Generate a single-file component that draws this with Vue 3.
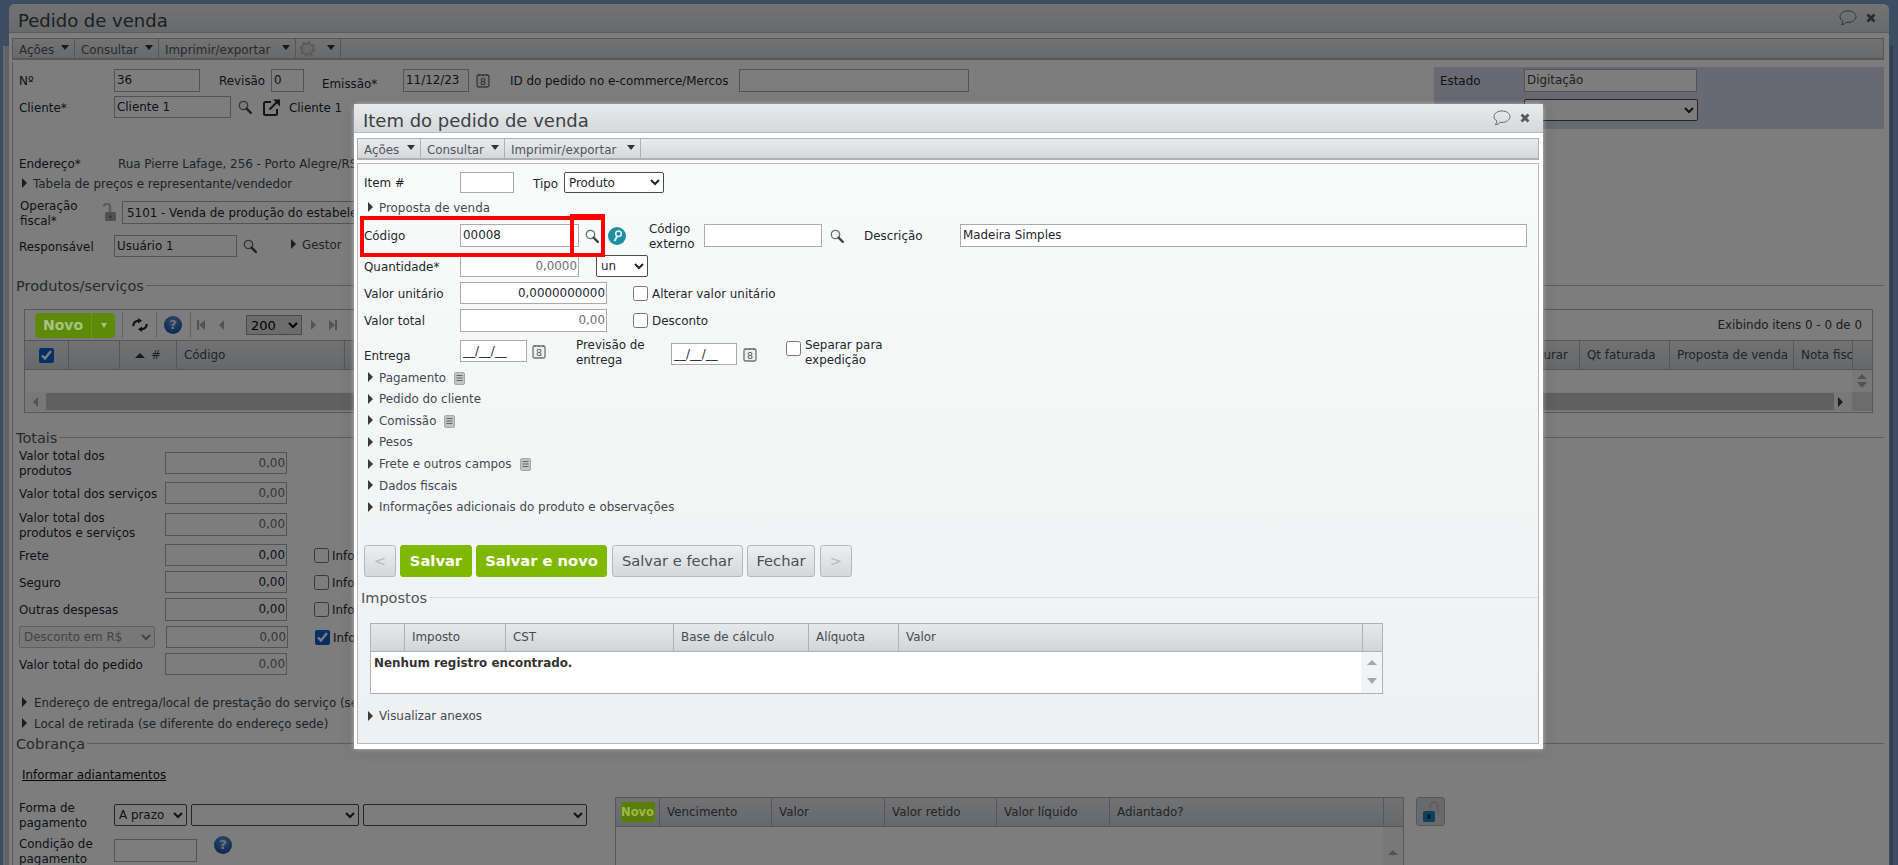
<script setup>
const mainMenu = [
  { label: 'Ações', cls: 'w62' },
  { label: 'Consultar', cls: 'w84' },
  { label: 'Imprimir/exportar', cls: 'w137' },
]
const itemMenu = [
  { label: 'Ações', cls: 'w63' },
  { label: 'Consultar', cls: 'w84' },
  { label: 'Imprimir/exportar', cls: 'w136' },
]
const accordion = [
  { label: 'Pagamento', note: true },
  { label: 'Pedido do cliente' },
  { label: 'Comissão', note: true },
  { label: 'Pesos' },
  { label: 'Frete e outros campos', note: true },
  { label: 'Dados fiscais' },
  { label: 'Informações adicionais do produto e observações' },
]
const taxCols = [
  { label: '', cls: 'w34' },
  { label: 'Imposto', cls: 'w101' },
  { label: 'CST', cls: 'w168' },
  { label: 'Base de cálculo', cls: 'w135' },
  { label: 'Alíquota', cls: 'w90' },
  { label: 'Valor', cls: 'w464' },
]
const billCols = [
  { label: 'Vencimento', cls: 'w112' },
  { label: 'Valor', cls: 'w113' },
  { label: 'Valor retido', cls: 'w112' },
  { label: 'Valor líquido', cls: 'w113' },
  { label: 'Adiantado?', cls: 'w274' },
]
</script>

<template>
  <div class="desk">
    <svg class="sprite" aria-hidden="true">
      <symbol id="i-search" viewBox="0 0 14 14">
        <circle cx="5.5" cy="5.5" r="4.2" fill="#f4f8fb" stroke="#6a6f73" stroke-width="1.3" />
        <path d="M8.6 8.6l4.2 4.2" stroke="#45484b" stroke-width="2.4" stroke-linecap="round" />
      </symbol>
      <symbol id="i-ext" viewBox="0 0 19 19">
        <path d="M9 4H3.5A1.5 1.5 0 0 0 2 5.5v10A1.5 1.5 0 0 0 3.5 17h10a1.5 1.5 0 0 0 1.500-1.500V11" fill="none" stroke="#2b2b2b" stroke-width="2" />
        <path d="M7.500 11.500L15 4" fill="none" stroke="#2b2b2b" stroke-width="2" />
        <path d="M11 1.500h7v7z" fill="#2b2b2b" />
      </symbol>
      <symbol id="i-cal" viewBox="0 0 14 15">
        <rect x="1" y="2" width="12" height="12" rx="1.500" fill="#eef0f1" stroke="#6f7376" stroke-width="1.300" />
        <path d="M3 1v2M7 1v2M11 1v2" stroke="#6f7376" stroke-width="1.300" />
        <text x="7" y="12.200" text-anchor="middle" font-size="9.500" font-family="DejaVu Sans" fill="#55595c">8</text>
      </symbol>
      <symbol id="i-note" viewBox="0 0 11 13">
        <rect x=".5" y=".5" width="10" height="12" rx="1.500" fill="#c2c4c6" stroke="#a6a8aa" />
        <path d="M2.500 3.500h6M2.500 6h6M2.500 8.500h6" stroke="#63666a" stroke-width="1" />
      </symbol>
      <symbol id="i-talk" viewBox="0 0 19 17">
        <path d="M9.500 1C5 1 1 3.500 1 7c0 2 1.200 3.600 3 4.600 0 1.300-.5 2.700-1.500 4 2 0 3.800-1 4.800-2.500.8.100 1.400.100 2.200.100 4.500 0 8.500-2.700 8.500-6.200S14 1 9.500 1z" fill="none" stroke="#5d6265" stroke-width="1" />
      </symbol>
      <symbol id="i-x" viewBox="0 0 10 10">
        <path d="M1.500 1.500l7 7M8.500 1.500l-7 7" stroke="#55595c" stroke-width="2.800" />
      </symbol>
      <symbol id="i-gear" viewBox="0 0 17 18">
        <circle cx="8.500" cy="9" r="5.500" fill="none" stroke="#b9b9b9" stroke-width="2" />
        <circle cx="8.500" cy="9" r="7" fill="none" stroke="#b9b9b9" stroke-width="2.200" stroke-dasharray="2.500 3" />
        <circle cx="8.500" cy="9" r="2.500" fill="none" stroke="#c8c8c8" />
      </symbol>
      <symbol id="i-lock" viewBox="0 0 18 19">
        <path d="M5 3.500A3 3 0 0 1 11 3.500V9" fill="none" stroke="#bbb" stroke-width="2.500" transform="translate(1 0)" />
        <rect x="7" y="9" width="11" height="9" rx="1.500" fill="#a6a6a6" />
        <rect x="11.500" y="12.500" width="2" height="2.500" fill="#666" />
      </symbol>
      <symbol id="i-lockblue" viewBox="0 0 18 22">
        <path d="M8 10V5a4 4 0 0 1 8 0v8" fill="none" stroke="#c4c4c4" stroke-width="2" />
        <rect x="1" y="10" width="12" height="11" rx="1.500" fill="#1e86c2" />
        <rect x="5.500" y="13.500" width="3" height="4.500" fill="#0a2a3f" />
      </symbol>
      <symbol id="i-key" viewBox="0 0 18 18">
        <circle cx="9" cy="9" r="9" fill="#1f8fa3" />
        <circle cx="10.500" cy="6.800" r="2.800" fill="none" stroke="#e8f6f8" stroke-width="1.500" />
        <path d="M9 9.500L6.500 14" stroke="#e8f6f8" stroke-width="1.800" />
      </symbol>
      <symbol id="i-refresh" viewBox="0 0 16 14">
        <path d="M1.500 8c-.5-3 2-5.500 5.500-5" fill="none" stroke="#1f1f1f" stroke-width="2.200" />
        <path d="M6 0l4 2.800L6 5.500z" fill="#1f1f1f" />
        <path d="M14.500 6c.5 3-2 5.500-5.500 5" fill="none" stroke="#1f1f1f" stroke-width="2.200" />
        <path d="M10 14l-4-2.800L10 8.500z" fill="#1f1f1f" />
      </symbol>
    </svg>

    <div class="side-l"></div>

    <main class="win">
      <header class="titlebar">
        <h1 class="title">Pedido de venda</h1>
        <svg class="ic-talk"><use href="#i-talk" /></svg>
        <svg class="ic-x"><use href="#i-x" /></svg>
      </header>

      <nav class="menu">
        <div v-for="m in mainMenu" :key="m.label" class="menu-item" :class="m.cls">
          <span>{{ m.label }}</span><i class="tri-d"></i>
        </div>
        <div class="menu-item menu-gear">
          <svg class="ic-gear"><use href="#i-gear" /></svg><i class="tri-d"></i>
        </div>
      </nav>

      <div class="panel">
        <section class="top">
          <div class="top-left">
            <div class="f h23 mt7">
              <span class="lab w95">Nº</span>
              <input class="inp w86" readonly value="36" />
              <span class="lab ml19 w52">Revisão</span>
              <input class="inp w33" readonly value="0" />
              <span class="lab ml18 w81 dn2">Emissão*</span>
              <input class="inp w66" readonly value="11/12/23" />
              <svg class="ic-cal ml7"><use href="#i-cal" /></svg>
              <span class="lab ml20 w229">ID do pedido no e-commerce/Mercos</span>
              <input class="inp w230" readonly />
            </div>
            <div class="f h22 mt4">
              <span class="lab w95">Cliente*</span>
              <input class="inp w117" readonly value="Cliente 1" />
              <svg class="ic-search ml7"><use href="#i-search" /></svg>
              <svg class="ic-ext ml10"><use href="#i-ext" /></svg>
              <span class="lab ml8">Cliente 1</span>
            </div>
            <div class="f h16 mt37">
              <span class="lab w99">Endereço*</span>
              <span class="lab soft">Rua Pierre Lafage, 256 - Porto Alegre/RS</span>
            </div>
            <div class="f h16 mt4 ml3 acc-row">
              <i class="tri-r"></i><span class="lab soft">Tabela de preços e representante/vendedor</span>
            </div>
            <div class="f h23 mt10">
              <span class="lab two w78 ml1">Operação fiscal*</span>
              <svg class="ic-lock"><use href="#i-lock" /></svg>
              <select class="sel-flat ml6 w480"><option>5101 - Venda de produção do estabelecimento</option></select>
            </div>
            <div class="f h22 mt11">
              <span class="lab w95">Responsável</span>
              <input class="inp w123" readonly value="Usuário 1" />
              <svg class="ic-search ml6"><use href="#i-search" /></svg>
              <span class="f ml34 up2 acc-row"><i class="tri-r"></i><span class="lab soft">Gestor</span></span>
            </div>
          </div>
          <aside class="state">
            <div class="f h23">
              <span class="lab w84">Estado</span>
              <input class="inp inp-soft w173" readonly value="Digitação" />
            </div>
            <div class="f h22 mt7">
              <span class="lab w84 soft">Estado</span>
              <select class="sel w174"><option></option></select>
            </div>
          </aside>
        </section>

        <div class="legend"><span class="legend-t">Produtos/serviços</span><i class="legend-l"></i></div>

        <section class="grid-a">
          <div class="grid-tools">
            <div class="novo"><span class="novo-t">Novo</span><span class="novo-c"><i class="tri-d tri-pale"></i></span></div>
            <i class="vsep ml7"></i>
            <svg class="ic-refresh ml9"><use href="#i-refresh" /></svg>
            <i class="vsep ml8"></i>
            <span class="help ml7">?</span>
            <i class="vsep ml8"></i>
            <i class="nav-first ml6"></i>
            <i class="tri-l ml14"></i>
            <select class="sel-page ml22"><option>200</option></select>
            <i class="tri-r tri-grey ml9"></i>
            <i class="nav-last ml13"></i>
            <span class="count">Exibindo itens 0 - 0 de 0</span>
          </div>
          <div class="ghead">
            <div class="gc w44 center"><input type="checkbox" class="chk" checked /></div>
            <div class="gc w51"></div>
            <div class="gc w57 center"><i class="tri-u"></i><span class="ml6">#</span></div>
            <div class="gc w168 pad7">Código</div>
            <div class="gc w1235 ralign">Qt a faturar</div>
            <div class="gc w90 pad7">Qt faturada</div>
            <div class="gc w124 pad7">Proposta de venda</div>
            <div class="gc w59 pad7 clip">Nota fiscal</div>
            <div class="gc-end"></div>
          </div>
          <div class="gbody">
            <div class="gbody-fill"></div>
            <div class="gscroll"><i class="tri-u tri-g"></i><i class="tri-dn tri-g"></i></div>
          </div>
          <div class="hbar">
            <i class="tri-l tri-bar"></i>
            <div class="hthumb"></div>
            <i class="tri-r"></i>
            <div class="hcorner"></div>
          </div>
        </section>

        <div class="legend mt17"><span class="legend-t">Totais</span><i class="legend-l"></i></div>

        <section class="totals">
          <div class="f h22 mt6">
            <span class="lab two w146">Valor total dos<br />produtos</span>
            <input class="inp num dim w122" readonly value="0,00" />
          </div>
          <div class="f h22 mt8">
            <span class="lab w146">Valor total dos serviços</span>
            <input class="inp num dim w122" readonly value="0,00" />
          </div>
          <div class="f h23 mt9">
            <span class="lab two w146">Valor total dos<br />produtos e serviços</span>
            <input class="inp num dim w122" readonly value="0,00" />
          </div>
          <div class="f h22 mt8">
            <span class="lab w146">Frete</span>
            <input class="inp num w122" readonly value="0,00" />
            <input type="checkbox" class="chk ml27" /><span class="lab ml3">Informar</span>
          </div>
          <div class="f h22 mt5">
            <span class="lab w146">Seguro</span>
            <input class="inp num w122" readonly value="0,00" />
            <input type="checkbox" class="chk ml27" /><span class="lab ml3">Informar</span>
          </div>
          <div class="f h23 mt5">
            <span class="lab w146">Outras despesas</span>
            <input class="inp num w122" readonly value="0,00" />
            <input type="checkbox" class="chk ml27" /><span class="lab ml3">Informar</span>
          </div>
          <div class="f h22 mt5">
            <select class="sel sel-off w136" disabled><option>Desconto em R$</option></select>
            <input class="inp num dim ml11 w122" readonly value="0,00" />
            <input type="checkbox" class="chk ml27" checked /><span class="lab ml3">Informar</span>
          </div>
          <div class="f h22 mt5">
            <span class="lab w146">Valor total do pedido</span>
            <input class="inp num dim w122" readonly value="0,00" />
          </div>
          <div class="f h16 mt19 ml3 acc-row">
            <i class="tri-r"></i><span class="lab soft pl6">Endereço de entrega/local de prestação do serviço (se diferente do endereço sede)</span>
          </div>
          <div class="f h16 mt5 ml3 acc-row">
            <i class="tri-r"></i><span class="lab soft pl6">Local de retirada (se diferente do endereço sede)</span>
          </div>
        </section>

        <div class="legend mt5"><span class="legend-t">Cobrança</span><i class="legend-l"></i></div>

        <section class="billing">
          <a class="link">Informar adiantamentos</a>
          <div class="bill-row">
            <div class="bill-left">
              <div class="f h22 mt7">
                <span class="lab two w95">Forma de<br />pagamento</span>
                <select class="sel w73"><option>A prazo</option></select>
                <select class="sel ml4 w168"><option></option></select>
                <select class="sel ml4 w224"><option></option></select>
              </div>
              <div class="f h23 mt13">
                <span class="lab two w95">Condição de<br />pagamento</span>
                <input class="inp w83" readonly />
                <span class="help ml17 up7">?</span>
              </div>
            </div>
            <div class="grid-b">
              <div class="bhead">
                <div class="gc w44 center"><span class="novo-s">Novo</span></div>
                <div v-for="c in billCols" :key="c.label" class="gc pad7" :class="c.cls">{{ c.label }}</div>
                <div class="gc-end"></div>
              </div>
              <div class="gbody tall">
                <div class="gbody-fill"></div>
                <div class="gscroll w20 spaced"><i class="tri-u tri-g"></i><i class="tri-dn tri-g"></i></div>
              </div>
            </div>
            <div class="lockbtn"><svg class="ic-lockb"><use href="#i-lockblue" /></svg></div>
          </div>
        </section>
      </div>
    </main>

    <div class="side-r"></div>

    <div class="overlay"></div>

    <section class="dialog">
      <header class="titlebar">
        <h2 class="title">Item do pedido de venda</h2>
        <svg class="ic-talk"><use href="#i-talk" /></svg>
        <svg class="ic-x"><use href="#i-x" /></svg>
      </header>
      <nav class="menu">
        <div v-for="m in itemMenu" :key="m.label" class="menu-item" :class="m.cls">
          <span>{{ m.label }}</span><i class="tri-d"></i>
        </div>
      </nav>
      <div class="dpanel">
        <div class="dform">
          <div class="f h21 mt8">
            <span class="lab w96">Item #</span>
            <input class="inp w54" />
            <span class="lab ml19 w31 dn-tipo">Tipo</span>
            <select class="sel w100"><option>Produto</option></select>
          </div>
          <div class="f h16 mt6 acc-row dacc">
            <i class="tri-r"></i><span class="lab soft">Proposta de venda</span>
          </div>
          <div class="f h23 mt9">
            <span class="lab w96">Código</span>
            <input class="inp w119" value="00008" />
            <svg class="ic-search ml6"><use href="#i-search" /></svg>
            <svg class="ic-key ml9"><use href="#i-key" /></svg>
            <span class="lab two ml23 w55">Código externo</span>
            <input class="inp w118" />
            <svg class="ic-search ml8"><use href="#i-search" /></svg>
            <span class="lab ml20 w96">Descrição</span>
            <input class="inp w567" value="Madeira Simples" />
          </div>
          <div class="f h22 mt8">
            <span class="lab w96">Quantidade*</span>
            <input class="inp num dim w119" value="0,0000" />
            <select class="sel ml17 w52"><option>un</option></select>
          </div>
          <div class="f h22 mt5">
            <span class="lab w96">Valor unitário</span>
            <input class="inp num w147" value="0,0000000000" />
            <input type="checkbox" class="chk ml26" />
            <span class="lab ml4">Alterar valor unitário</span>
          </div>
          <div class="f h23 mt5">
            <span class="lab w96">Valor total</span>
            <input class="inp num dim w147" value="0,00" />
            <input type="checkbox" class="chk ml26" />
            <span class="lab ml4">Desconto</span>
          </div>
          <div class="f h26 mt8 start">
            <span class="lab w96 dn7">Entrega</span>
            <input class="inp date w67" value="__/__/__" />
            <svg class="ic-cal ml5 dn4"><use href="#i-cal" /></svg>
            <span class="lab two ml30 w95 up4">Previsão de<br />entrega</span>
            <input class="inp date w66 dn3" value="__/__/__" />
            <svg class="ic-cal ml6 dn7"><use href="#i-cal" /></svg>
            <input type="checkbox" class="chk ml29 dn1" />
            <span class="lab two ml4 w90 up4">Separar para<br />expedição</span>
          </div>
          <div class="acc-list">
            <div v-for="a in accordion" :key="a.label" class="f h16 acc-row dacc">
              <i class="tri-r"></i><span class="lab soft">{{ a.label }}</span>
              <svg v-if="a.note" class="ic-note ml2"><use href="#i-note" /></svg>
            </div>
          </div>
          <div class="btns">
            <button class="btn w32 off">&lt;</button>
            <button class="btn go w72 ml4">Salvar</button>
            <button class="btn go w131 ml4">Salvar e novo</button>
            <button class="btn w131 ml5">Salvar e fechar</button>
            <button class="btn w68 ml4">Fechar</button>
            <button class="btn w32 off ml5">&gt;</button>
          </div>
        </div>
        <div class="legend legend-d"><span class="legend-t">Impostos</span><i class="legend-l"></i></div>
        <div class="tax">
          <div class="tax-head">
            <div v-for="c in taxCols" :key="c.cls" class="gc pad7" :class="c.cls">{{ c.label }}</div>
            <div class="gc-end"></div>
          </div>
          <div class="tax-body">
            <div class="tax-empty">Nenhum registro encontrado.</div>
            <div class="gscroll w21 spaced light"><i class="tri-u tri-g"></i><i class="tri-dn tri-g"></i></div>
          </div>
        </div>
        <div class="f h16 mt14 acc-row dacc">
          <i class="tri-r"></i><span class="lab soft">Visualizar anexos</span>
        </div>
      </div>
      <div class="mark mark-a"></div>
      <div class="mark mark-b"></div>
    </section>
  </div>
</template>

<style>
html, body { margin: 0; overflow: hidden; }
</style>

<style scoped>
.desk {
  position: relative; width: 1898px; height: 865px; overflow: hidden;
  display: flex; align-items: stretch;
  background: #7a9fca;
  font-family: "DejaVu Sans", sans-serif; font-size: 11.900px; color: #1d2730;
}
.sprite { position: absolute; width: 0; height: 0; }
.side-l { width: 9px; flex: none; margin-top: 46px; background: linear-gradient(90deg, #7a9fca 0 3px, #d8d8d8 3px 5px, #c8c8c8 5px 9px); }
.side-r { width: 9px; flex: none; background: linear-gradient(90deg, #7a9fca 0 1px, #6a7c92 1px 4px, #7a9fca 4px); margin-top: 46px; }
.win { flex: 1; min-width: 0; margin-top: 4px; background: #fff; border-radius: 6px 6px 0 0; overflow: hidden; }

.titlebar {
  height: 29px; display: flex; align-items: center; gap: 9px; padding: 0 13px 0 9px;
  background: linear-gradient(#e9eaec, #d5d8da); border-bottom: 1px solid #b7babc; box-sizing: border-box;
}
.title { flex: 1; margin: 0; padding-top: 5px; font-weight: 400; font-size: 18px; line-height: 22px; color: #3c4144; }
.ic-talk { width: 18px; height: 16px; }
.ic-x { width: 10px; height: 10px; }

.menu {
  height: 22px; margin: 5px 5px 0 3px; display: flex;
  background: linear-gradient(#e9eaec, #d5d8da); border: 1px solid #aeb1b4; border-width: 1px 1px 2px; box-sizing: border-box;
  color: #50565b;
}
.menu-item { display: flex; align-items: center; justify-content: space-between; padding: 0 5px 0 6px; border-right: 1px solid #aeb1b4; box-sizing: border-box; }
.menu-item span { padding-top: 2px; }
.menu-item .tri-d { border-width: 5px 4.500px 0; margin-top: -2px; }
.menu-gear { width: 45px; padding-left: 3px; }
.ic-gear { width: 17px; height: 18px; }

.panel { margin: 2px 5px 0 3px; border-left: 1px solid #b5b5b5; }
.top { display: flex; height: 216px; }
.top-left { flex: 1; padding-left: 6px; min-width: 0; }
.state { width: 450px; height: 62px; margin-top: 5px; padding: 2px 0 0 6px; box-sizing: border-box; background: #d6d6ea; }

.f { display: flex; align-items: center; }
.start { align-items: flex-start; }
.lab { flex: none; line-height: 15px; padding-top: 2px; white-space: nowrap; }
.two { white-space: normal; }
.soft { color: #424a52; }
.inp {
  flex: none; height: 100%; box-sizing: border-box; border: 1px solid #a8aaac; background: #fff; padding: 0 1px 1px 2px; margin: 0;
  font: inherit; color: #1d2730; border-radius: 0; outline: none;
}
.inp-soft { color: #3c4144; }
.num { text-align: right; }
.dim { color: #6c7074; }
.date { height: 22px; }
.sel, .sel-flat {
  flex: none; height: 100%; box-sizing: border-box; font: inherit; margin: 0; color: #1d2730; background: #fff;
  border: 1px solid #4c4c4c; border-radius: 2px; padding: 0;
}
.sel-flat { border-color: #a8aaac; border-radius: 0; }
.sel-off { border-color: #c4c4c4; color: #8a8a8a; background: #f4f4f4; opacity: 1; }
.chk { flex: none; width: 15px; height: 15px; margin: 0; accent-color: #0a63ce; }

.tri-d, .tri-dn { display: inline-block; width: 0; height: 0; border: 5px solid transparent; border-top: 6px solid #333; border-bottom: 0; }
.tri-u { display: inline-block; width: 0; height: 0; border: 5px solid transparent; border-bottom: 5px solid #333; border-top: 0; }
.tri-r { display: inline-block; flex: none; width: 0; height: 0; border: 5px solid transparent; border-left: 5px solid #3a3a3a; border-right: 0; }
.tri-l { display: inline-block; flex: none; width: 0; height: 0; border: 5px solid transparent; border-right: 5px solid #aaa; border-left: 0; }
.tri-grey { border-left-color: #aaa; }
.tri-pale { border-top-color: #a9c27f; border-width: 5px 3.500px 0; }
.tri-g { border-bottom-color: #a5a8aa; border-top-color: #a5a8aa; }
.acc-row { gap: 6px; }
.dacc { margin-left: 4px; }
.pl6 { padding-left: 1px; }

.ic-search { flex: none; width: 14px; height: 14px; }
.ic-ext { flex: none; width: 19px; height: 19px; }
.ic-cal { flex: none; width: 14px; height: 15px; }
.ic-lock { flex: none; width: 18px; height: 19px; }
.ic-key { flex: none; width: 18px; height: 18px; }
.ic-note { flex: none; width: 11px; height: 13px; margin-top: 2px; }
.ic-refresh { width: 16px; height: 14px; flex: none; }
.ic-lockb { width: 18px; height: 22px; }

.legend { display: flex; align-items: center; height: 16px; padding-left: 3px; margin-top: 0; }
.legend-t { font-size: 14.500px; color: #50565b; white-space: nowrap; }
.legend-l { flex: 1; height: 1px; background: #bbb; margin: 0 0 1px 2px; }

.grid-a { margin: 15px 11px 0 11px; border: 1px solid #b4b4b4; background: #fff; height: 104px; box-sizing: border-box; }
.grid-tools { height: 30px; display: flex; align-items: center; padding-left: 10px; position: relative; }
.novo { position: relative; z-index: 2; width: 80px; height: 25px; display: flex; border-radius: 4px; background: #5e8a0a; color: #a9c27f; font-weight: 700; overflow: hidden; flex: none; }
.novo-t { width: 57px; text-align: center; line-height: 25px; font-size: 14px; border-right: 1px solid #6c9620; box-sizing: border-box; }
.novo-c { flex: 1; display: flex; align-items: center; justify-content: center; }
.vsep { width: 1px; height: 26px; background: #c9c9c9; flex: none; }
.help {
  flex: none; width: 18px; height: 18px; border-radius: 50%; text-align: center; line-height: 18px; font-weight: 700; font-size: 13px; color: #dfe8f5;
  background: radial-gradient(circle at 50% 30%, #5f96d8, #1c5aa6 75%);
}
.nav-first, .nav-last { flex: none; width: 8px; height: 10px; box-sizing: border-box; }
.nav-first { background: linear-gradient(#aaa, #aaa) left/2px 100% no-repeat; position: relative; }
.nav-first::after { content: ""; position: absolute; left: 2px; border: 5px solid transparent; border-right: 6px solid #aaa; border-left: 0; }
.nav-last { background: linear-gradient(#aaa, #aaa) right/2px 100% no-repeat; position: relative; }
.nav-last::after { content: ""; position: absolute; left: 0; border: 5px solid transparent; border-left: 6px solid #aaa; border-right: 0; }
.sel-page { flex: none; width: 56px; height: 20px; box-sizing: border-box; font: inherit; font-size: 13px; border: 1px solid #9a9a9a; background: #ddd; margin: 0; padding: 0; border-radius: 0; }
.count { margin-left: auto; padding-right: 10px; color: #3a4046; }

.ghead, .bhead, .tax-head {
  display: flex; height: 30px; box-sizing: border-box; background: linear-gradient(#e7e8ea, #d2d5d8); border: 1px solid #aeb2b6; border-width: 1px 0; color: #454b50;
}
.gc { flex: none; display: flex; align-items: center; box-sizing: border-box; border-right: 1px solid #aeb2b6; white-space: nowrap; overflow: hidden; }
.gc-end { flex: 1; }
.center { justify-content: center; }
.pad7 { padding-left: 7px; }
.ralign { justify-content: flex-end; padding-right: 11px; }
.gbody { display: flex; height: 22px; }
.gbody-fill { flex: 1; }
.gscroll { width: 20px; display: flex; flex-direction: column; align-items: center; justify-content: center; gap: 3px; background: #f4f4f4; }
.spaced { gap: 13px; }
.light { background: #f2f3f4; }
.hbar { display: flex; align-items: center; height: 19px; background: #f4f4f4; }
.tri-bar { margin-left: 8px; }
.hthumb { width: 1788px; height: 17px; margin-left: 8px; background: #c4c4c4; }
.hbar .tri-r { margin-left: 4px; }
.hcorner { margin-left: auto; width: 20px; height: 100%; background: #dcdcdc; }

.totals { padding-left: 6px; }
.billing { padding-left: 9px; }
.link { display: block; height: 16px; line-height: 16px; margin-top: 15px; text-decoration: underline; color: #111; }
.bill-row { display: flex; margin-top: 14px; }
.bill-left { width: 596px; margin-left: -3px; flex: none; }
.grid-b { width: 789px; flex: none; border-left: 1px solid #aeb2b6; border-right: 1px solid #aeb2b6; box-sizing: border-box; }
.bhead { height: 30px; }
.novo-s { position: relative; z-index: 2; width: 34px; height: 20px; border-radius: 3px; background: #5a7f06; color: #9fb84a; font-weight: 700; font-size: 11.500px; line-height: 20px; text-align: center; }
.tall { height: 70px; }
.lockbtn { width: 29px; height: 29px; margin-left: 12px; box-sizing: border-box; border: 1px solid #aeb2b6; border-radius: 3px; background: #d6d8da; display: flex; align-items: center; justify-content: center; }

.overlay { position: absolute; inset: 0; background: rgba(0, 0, 0, .51); }

.dialog {
  position: absolute; left: 354px; top: 104px; width: 1189px; height: 645px; background: #fff; border-radius: 5px 5px 0 0;
  box-shadow: 0 0 5px rgba(255, 255, 255, .55), 0 2px 16px rgba(0, 0, 0, .15);
}
.dialog .menu { width: 1182px; box-sizing: border-box; }
.dpanel {
  margin: 3px 0 0 3px; width: 1182px; height: 581px; box-sizing: border-box; border: 1px solid #b6babd;
  background: linear-gradient(#f9fbfa, #eff0f2);
}
.dform { padding-left: 6px; }
.acc-list { display: flex; flex-direction: column; gap: 5.670px; margin-top: 3px; }
.acc-list .dacc { margin-left: 4px; }
.btns { display: flex; height: 32px; margin-top: 30px; }
.btn {
  flex: none; height: 32px; box-sizing: border-box; font: inherit; font-size: 14.700px; padding: 0; border: 1px solid #b4b7bb; border-radius: 3px;
  background: linear-gradient(#eceef0, #d5d8db); color: #4a4f54;
}
.go { background: #7fb800; border-color: #7fb800; color: #fff; font-weight: 700; font-size: 14.700px; }
.off { color: #b5b8bb; }
.legend-d { margin-top: 13px; }
.legend-d .legend-l { background: #dcdee0; }
.tax { margin: 17px 0 0 12px; width: 1013px; height: 71px; box-sizing: border-box; border: 1px solid #aeb2b6; background: #fff; }
.tax-head { height: 28px; border-width: 0 0 1px; }
.tax-body { display: flex; height: 41px; }
.tax-empty { flex: 1; font-weight: 700; padding: 4px 0 0 3px; color: #333; }
.dpanel > .dacc { margin-left: 10px; }

.mark { position: absolute; box-sizing: border-box; border: 4px solid #f00; pointer-events: none; }
.mark-a { left: 6px; top: 112px; width: 245px; height: 41px; }
.mark-b { left: 216px; top: 110px; width: 35px; height: 43px; }

.up2 { margin-top: -4px; }
.up4 { margin-top: -4px; }
.up7 { margin-top: -12px; }
.dn1 { margin-top: 1px; }
.dn2 { margin-top: 6px; }
.dn-tipo { margin-top: 2px; }
.dn3 { margin-top: 3px; }
.dn4 { margin-top: 4px; }
.dn7 { margin-top: 7px; }
.clip { overflow: hidden; }

.h16 { height: 16px; } .h21 { height: 21px; } .h22 { height: 22px; } .h23 { height: 23px; } .h26 { height: 26px; }
.mt4 { margin-top: 4px; } .mt5 { margin-top: 5px; } .mt6 { margin-top: 6px; } .mt7 { margin-top: 7px; } .mt8 { margin-top: 8px; }
.mt9 { margin-top: 9px; } .mt10 { margin-top: 10px; } .mt11 { margin-top: 11px; } .mt13 { margin-top: 13px; } .mt14 { margin-top: 14px; }
.mt17 { margin-top: 17px; } .mt19 { margin-top: 19px; } .mt37 { margin-top: 37px; }
.ml1 { margin-left: 1px; } .ml2 { margin-left: 2px; } .ml3 { margin-left: 3px; } .ml4 { margin-left: 4px; } .ml5 { margin-left: 5px; } .ml6 { margin-left: 6px; }
.ml7 { margin-left: 7px; } .ml8 { margin-left: 8px; } .ml9 { margin-left: 9px; } .ml10 { margin-left: 10px; } .ml11 { margin-left: 11px; }
.ml13 { margin-left: 13px; } .ml14 { margin-left: 14px; } .ml17 { margin-left: 17px; } .ml18 { margin-left: 18px; } .ml19 { margin-left: 19px; }
.ml20 { margin-left: 20px; } .ml21 { margin-left: 21px; } .ml22 { margin-left: 22px; } .ml23 { margin-left: 23px; } .ml26 { margin-left: 26px; }
.ml27 { margin-left: 27px; } .ml29 { margin-left: 29px; } .ml30 { margin-left: 30px; } .ml34 { margin-left: 34px; }
.w20 { width: 20px; } .w21 { width: 21px; } .w31 { width: 31px; } .w32 { width: 32px; } .w33 { width: 33px; } .w34 { width: 34px; }
.w44 { width: 44px; } .w51 { width: 51px; } .w52 { width: 52px; } .w54 { width: 54px; } .w55 { width: 55px; } .w57 { width: 57px; } .w59 { width: 59px; }
.w62 { width: 62px; } .w63 { width: 63px; } .w66 { width: 66px; } .w67 { width: 67px; } .w68 { width: 68px; } .w72 { width: 72px; } .w73 { width: 73px; }
.w78 { width: 78px; } .w81 { width: 81px; } .w83 { width: 83px; } .w84 { width: 84px; } .w86 { width: 86px; } .w90 { width: 90px; } .w95 { width: 95px; }
.w96 { width: 96px; } .w99 { width: 99px; } .w100 { width: 100px; } .w101 { width: 101px; } .w112 { width: 112px; } .w113 { width: 113px; }
.w117 { width: 117px; } .w118 { width: 118px; } .w119 { width: 119px; } .w122 { width: 122px; } .w123 { width: 123px; } .w124 { width: 124px; }
.w131 { width: 131px; } .w135 { width: 135px; } .w136 { width: 136px; } .w137 { width: 137px; } .w146 { width: 146px; } .w147 { width: 147px; }
.w168 { width: 168px; } .w173 { width: 173px; } .w174 { width: 174px; } .w224 { width: 224px; } .w229 { width: 229px; }
.w230 { width: 230px; } .w274 { width: 274px; } .w464 { width: 464px; } .w480 { width: 480px; } .w567 { width: 567px; } .w1235 { width: 1235px; }
</style>
